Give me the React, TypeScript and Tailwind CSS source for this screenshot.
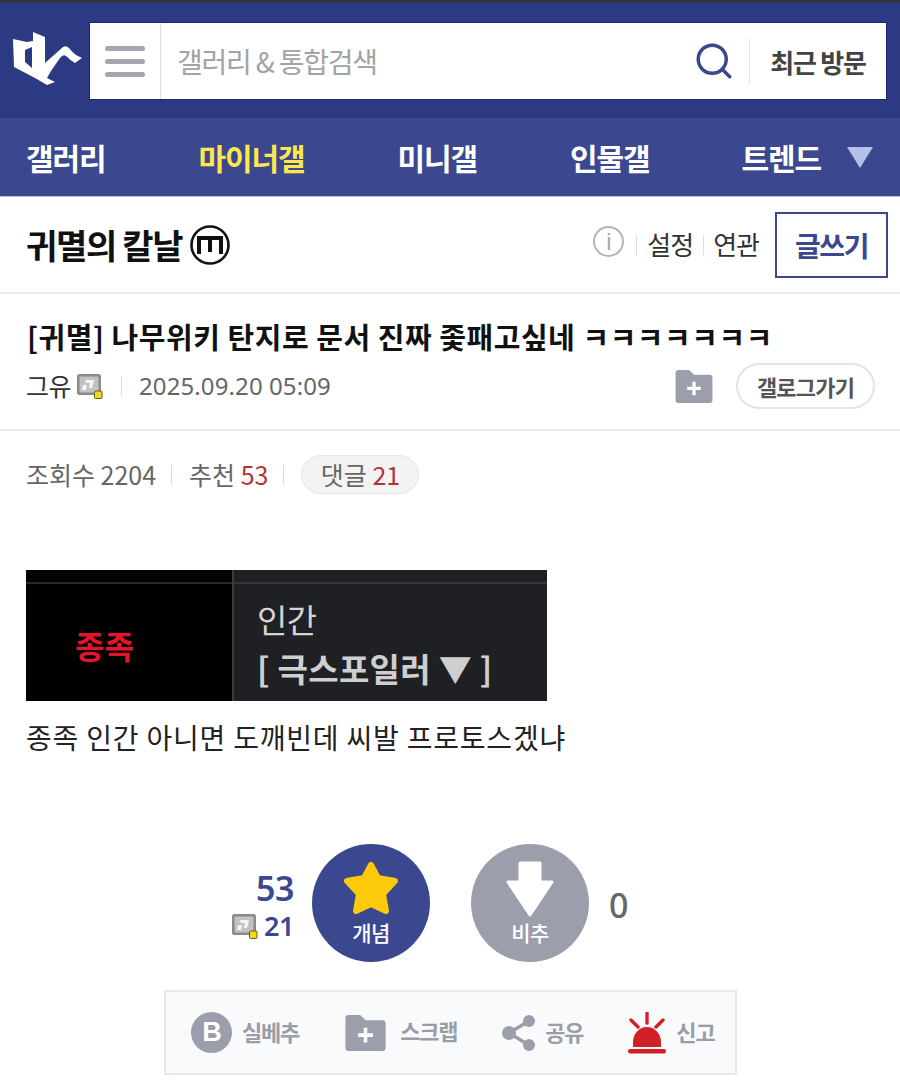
import React from 'react';
import { Search } from 'lucide-react';

const Divider = ({ className = 'h-4' }: { className?: string }) => (
  <span className={`w-px bg-[#dcdcdc] ${className}`} />
);

const GallIcon = ({ className = '' }: { className?: string }) => (
  <svg viewBox="0 0 26 25" className={className}>
    <rect x="0" y="0" width="24" height="21" rx="2.5" fill="#8a8a8a" />
    <rect x="2.5" y="2.5" width="19" height="16" rx="1" fill="#c2c2c2" />
    <path d="M8 6h9l-2 8h-3l1-5h-4zM6 11h4l-1 5H5z" fill="#f6f6f6" />
    <rect x="17.5" y="17" width="7.5" height="7.5" rx="1" fill="#f5d327" stroke="#6b5d10" strokeWidth="1" />
  </svg>
);

const FolderPlus = ({ className = '' }: { className?: string }) => (
  <svg viewBox="0 0 38 34" className={className}>
    <path d="M0 3a3 3 0 0 1 3-3h11l5 5h16a3 3 0 0 1 3 3v23a3 3 0 0 1-3 3H3a3 3 0 0 1-3-3z" fill="#9c9eab" />
    <path d="M19 12v14M12 19h14" stroke="#fff" strokeWidth="3.4" />
  </svg>
);

const navItems = [
  { label: '갤러리', active: false },
  { label: '마이너갤', active: true },
  { label: '미니갤', active: false },
  { label: '인물갤', active: false },
];

export default function App() {
  return (
    <div className="w-[900px] h-[1091px] overflow-hidden bg-white font-['Noto_Sans_CJK_KR','Noto_Sans',sans-serif] text-[#222]">
      {/* 상단 검색 */}
      <header className="h-[118px] bg-[#2b3a83] border-t-[3px] border-[#33343d] flex items-start pl-[13px] pr-[13px] pt-[19px]">
        <svg viewBox="0 0 70 54" className="w-[70px] h-[54px] mt-[10px] shrink-0">
          <path
            d="M0 7 L14 10 L20 9 L20 0 L32 5 L32 31 L50 15 Q53 13 56 16 Q60 21 63 23 L69 26 L62 31 Q57 28 53 24 Q50 22 47 26 L38 39 L34 46 L42 50 L34 53 L22 46 L1 35 Z M12 18 L12 30 L19 36 L19 15 Z"
            fill="#fff"
            fillRule="evenodd"
          />
        </svg>
        <div className="ml-[6px] h-[78px] flex-1 bg-white border border-[#1d2864] flex items-center">
          <div className="w-[71px] h-full border-r border-[#dddddd] flex flex-col items-center justify-center gap-[8px] shrink-0">
            <span className="w-[40px] h-[5px] rounded-full bg-[#a4a6b0]" />
            <span className="w-[40px] h-[5px] rounded-full bg-[#a4a6b0]" />
            <span className="w-[40px] h-[5px] rounded-full bg-[#a4a6b0]" />
          </div>
          <span className="ml-[16px] flex-1 text-[28px] tracking-[-1.2px] text-[#a3a3a3]">갤러리 & 통합검색</span>
          <Search size={42} strokeWidth={2} className="text-[#3b4890]" />
          <span className="ml-[14px] w-px h-[44px] bg-[#e2e2e2]" />
          <span className="w-[136px] text-center text-[26px] font-bold tracking-[-1.2px] text-[#444]">최근 방문</span>
        </div>
      </header>

      {/* 메뉴 */}
      <nav className="h-[79px] bg-[#3b4890] border-b border-[#b9c0e0] flex items-center pl-[26px] gap-[93px] text-[30px] font-bold tracking-[-1.1px] text-white">
        {navItems.map((item) => (
          <span key={item.label} className={item.active ? 'text-[#fde74c]' : ''}>
            {item.label}
          </span>
        ))}
        <span className="flex items-center gap-[26px] -ml-[1px]">
          트렌드
          <svg viewBox="0 0 26 21" className="w-[26px] h-[21px]">
            <path d="M0 0h26L13 21z" fill="#b6bfe8" />
          </svg>
        </span>
      </nav>

      {/* 갤러리 제목 */}
      <section className="h-[97px] border-b-2 border-[#ededed] flex items-center pl-[26px] pr-[12px]">
        <h2 className="text-[34px] font-bold tracking-[-1.3px] text-[#111]">귀멸의 칼날</h2>
        <svg viewBox="0 0 40 40" className="ml-[8px] w-[40px] h-[40px]">
          <circle cx="20" cy="20" r="18.5" fill="none" stroke="#111" strokeWidth="2.6" />
          <path d="M9 29V13h22v16M20 13v14" fill="none" stroke="#111" strokeWidth="4" />
        </svg>
        <span className="ml-auto -mt-[6px] w-[31px] h-[31px] rounded-full border-[2px] border-[#b5b5b5] flex items-center justify-center text-[24px] font-['Liberation_Sans',sans-serif] text-[#a8a8a8]">
          i
        </span>
        <Divider className="ml-[12px] h-[20px]" />
        <span className="ml-[10px] text-[26px] tracking-[-1px] text-[#333] -mt-[3px]">설정</span>
        <Divider className="ml-[10px] h-[20px]" />
        <span className="ml-[9px] text-[26px] tracking-[-1px] text-[#333] -mt-[3px]">연관</span>
        <button className="ml-[16px] w-[113px] h-[66px] border-2 border-[#3b4890] text-[28px] font-bold tracking-[-1.4px] text-[#3b4890]">
          글쓰기
        </button>
      </section>

      {/* 글 제목 */}
      <section className="h-[137px] border-b-2 border-[#ececec] pl-[27px] pr-[25px]">
        <h1 className="pt-[20px] text-[29px] leading-[44px] font-bold tracking-[0.53px] text-[#111] whitespace-nowrap">
          [귀멸] 나무위키 탄지로 문서 진짜 좇패고싶네 ㅋㅋㅋㅋㅋㅋㅋ
        </h1>
        <div className="flex items-center mt-[5px]">
          <span className="-ml-[1px] text-[25px] tracking-[-0.5px] text-[#333]">그유</span>
          <GallIcon className="ml-[6px] w-[26px] h-[25px]" />
          <Divider className="ml-[18px] h-[20px]" />
          <span className="ml-[17px] text-[24px] text-[#666] tracking-[0.1px] font-['Noto_Sans',sans-serif]">2025.09.20 05:09</span>
          <FolderPlus className="ml-auto w-[38px] h-[33px]" />
          <button className="ml-[23px] w-[139px] h-[46px] rounded-full border-2 border-[#e4e4e8] text-[22px] font-bold tracking-[-0.8px] text-[#555]">
            갤로그가기
          </button>
        </div>
      </section>

      {/* 조회수 */}
      <div className="flex items-center pl-[26px] pt-[24px] text-[25px] tracking-[0px] text-[#666]">
        <span>조회수 2204</span>
        <Divider className="ml-[15px] h-[20px]" />
        <span className="ml-[17px]">추천 <span className="text-[#b3323d]">53</span></span>
        <Divider className="ml-[15px] h-[20px]" />
        <span className="ml-[17px] w-[118px] h-[39px] rounded-full bg-[#f3f3f3] border border-[#e4e4e4] flex items-center justify-center">
          댓글&nbsp;<span className="text-[#b3323d]">21</span>
        </span>
      </div>

      {/* 본문 */}
      <div className="mt-[76px] ml-[26px] w-[521px] h-[131px] flex bg-[#1f2024]">
        <div className="w-[208px] bg-black border-r-2 border-[#3a3b40] flex flex-col">
          <div className="h-[14px] border-b-2 border-[#2a2a2d]" />
          <div className="flex-1 flex items-center pl-[49px] pt-[5px] text-[32px] font-bold tracking-[0px] text-[#e5142c]">종족</div>
        </div>
        <div className="flex-1 flex flex-col">
          <div className="h-[14px] border-b-2 border-[#35363b]" />
          <div className="pl-[23px] pt-[15px] text-[33px] leading-[40px] tracking-[-0.7px] text-[#d4d4d4]">인간</div>
          <div className="pl-[23px] pt-[9px] text-[33px] leading-[40px] font-bold tracking-[0.3px] text-[#cfcfcf] whitespace-nowrap">[ 극스포일러 ▼ ]</div>
        </div>
      </div>
      <p className="mt-[16px] ml-[26px] text-[28px] leading-[40px] tracking-[0.8px] text-[#222] whitespace-nowrap">
        종족 인간 아니면 도깨빈데 씨발 프로토스겠냐
      </p>

      {/* 추천 */}
      <div className="mt-[87px] ml-[230px] flex items-center">
        <div className="w-[64px] flex flex-col items-end text-[#3b4890] font-['Noto_Sans',sans-serif]">
          <span className="text-[34px] leading-[40px] font-semibold tracking-[-0.5px] pt-[6px]">53</span>
          <span className="flex items-center gap-[6px] text-[27px] leading-[36px] font-semibold tracking-[-0.5px]">
            <GallIcon className="w-[26px] h-[25px]" />
            21
          </span>
        </div>
        <div className="ml-[18px] w-[118px] h-[118px] rounded-full bg-[#3b4890] flex flex-col items-center pt-[17px]">
          <svg viewBox="0 0 56 54" className="w-[56px] h-[54px] shrink-0">
            <path
              d="M28 4 L35 17 L52 20 L40 33 L43 50 L28 43 L13 50 L16 33 L4 20 L21 17 Z"
              fill="#fdca0a"
              stroke="#fdca0a"
              strokeWidth="6"
              strokeLinejoin="round"
            />
          </svg>
          <span className="text-[21px] leading-[26px] font-medium text-white tracking-[-0.5px] mt-[4px]">개념</span>
        </div>
        <div className="ml-[41px] w-[118px] h-[118px] rounded-full bg-[#9c9eab] flex flex-col items-center pt-[17px]">
          <svg viewBox="0 0 48 56" className="w-[48px] h-[56px] shrink-0">
            <path d="M14 2 H34 V21 H46 L24 54 L2 21 H14 Z" fill="#fff" stroke="#fff" strokeWidth="3" strokeLinejoin="round" />
          </svg>
          <span className="text-[21px] leading-[26px] font-medium text-white tracking-[-0.5px] mt-[2px]">비추</span>
        </div>
        <span className="ml-[20px] pt-[4px] text-[34px] font-medium text-[#666] font-['Noto_Sans',sans-serif]">0</span>
      </div>

      {/* 하단 버튼 */}
      <div className="mt-[28px] ml-[164px] w-[573px] h-[85px] bg-[#f9fafc] border-2 border-[#e6e8f0] flex items-center text-[22px] font-bold tracking-[-1.2px] text-[#9a9ca6]">
        <span className="ml-[25px] w-[41px] h-[41px] rounded-full bg-[#9c9eab] flex items-center justify-center text-white text-[27px] font-black font-['Liberation_Sans',sans-serif]">B</span>
        <span className="ml-[10px] -mt-[2px]">실베추</span>
        <FolderPlus className="ml-[46px] w-[41px] h-[36px]" />
        <span className="ml-[14px] -mt-[5px]">스크랩</span>
        <svg viewBox="0 0 36 38" className="ml-[44px] w-[36px] h-[38px]">
          <path d="M28 7 L8 19 L28 31" fill="none" stroke="#9c9eab" strokeWidth="3.5" />
          <circle cx="28" cy="7" r="6" fill="#9c9eab" />
          <circle cx="8" cy="19" r="7" fill="#9c9eab" />
          <circle cx="28" cy="31" r="6" fill="#9c9eab" />
        </svg>
        <span className="ml-[8px] -mt-[2px]">공유</span>
        <svg viewBox="0 0 38 42" className="ml-[45px] w-[38px] h-[42px]">
          <path d="M5 35 V30 A14 15 0 0 1 33 30 V35 Z" fill="#d12027" />
          <rect x="0" y="37" width="38" height="4.5" rx="2" fill="#d12027" />
          <path d="M19 1 V11 M3 8 L10 15 M35 8 L28 15" stroke="#d12027" strokeWidth="3.4" strokeLinecap="round" fill="none" />
        </svg>
        <span className="ml-[10px] -mt-[2px]">신고</span>
      </div>
    </div>
  );
}
